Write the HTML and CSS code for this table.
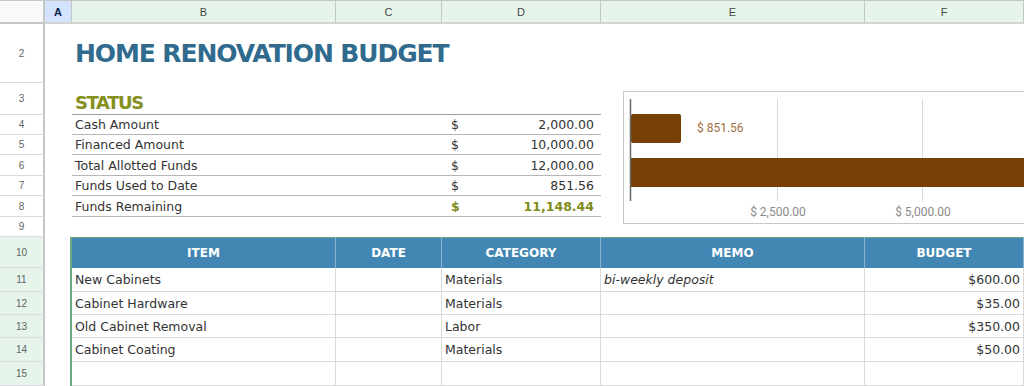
FILE: index.html
```html
<!DOCTYPE html>
<html>
<head>
<meta charset="utf-8">
<link rel="stylesheet" href="styles.css">
</head>
<body>
<div class="sheet">
  <div class="chart">
    <svg width="440" height="134" viewBox="0 0 440 134">
      <line x1="153.5" y1="7" x2="153.5" y2="109" stroke="#d9d9d9" stroke-width="1"/>
      <line x1="298.5" y1="7" x2="298.5" y2="109" stroke="#d9d9d9" stroke-width="1"/>
      <rect x="7" y="22" width="50" height="29" rx="2" fill="#773f03"/>
      <rect x="7" y="66" width="430" height="29" fill="#773f03"/>
      <line x1="6.5" y1="7" x2="6.5" y2="109" stroke="#666" stroke-width="1.5"/>
      <text x="73" y="40" class="lbl">$ 851.56</text>
      <text x="154" y="124" class="ax" text-anchor="middle">$ 2,500.00</text>
      <text x="299" y="124" class="ax" text-anchor="middle">$ 5,000.00</text>
    </svg>
  </div>

  <!-- column headers -->
  <div class="corner"></div>
  <div class="ch sel">A</div>
  <div class="ch">B</div>
  <div class="ch">C</div>
  <div class="ch">D</div>
  <div class="ch">E</div>
  <div class="ch">F</div>

  <!-- row 2 -->
  <div class="rh">2</div>
  <div></div>
  <div class="title">HOME RENOVATION BUDGET</div>
  <div></div>
  <div></div>

  <!-- row 3 -->
  <div class="rh">3</div>
  <div></div>
  <div class="status">STATUS</div>

  <!-- rows 4-8 -->
  <div class="rh">4</div>
  <div></div>
  <div class="sl">Cash Amount</div>
  <div class="sc"></div>
  <div class="sv"><span>$</span><span>2,000.00</span></div>

  <div class="rh">5</div>
  <div></div>
  <div class="sl">Financed Amount</div>
  <div class="sc"></div>
  <div class="sv"><span>$</span><span>10,000.00</span></div>

  <div class="rh">6</div>
  <div></div>
  <div class="sl">Total Allotted Funds</div>
  <div class="sc"></div>
  <div class="sv"><span>$</span><span>12,000.00</span></div>

  <div class="rh">7</div>
  <div></div>
  <div class="sl">Funds Used to Date</div>
  <div class="sc"></div>
  <div class="sv"><span>$</span><span>851.56</span></div>

  <div class="rh">8</div>
  <div></div>
  <div class="sl">Funds Remaining</div>
  <div class="sc"></div>
  <div class="sv total"><span>$</span><span>11,148.44</span></div>

  <!-- row 9 -->
  <div class="rh">9</div>
  <div></div>
  <div></div>
  <div></div>
  <div></div>

  <!-- row 10 header -->
  <div class="rh hl">10</div>
  <div class="ta"></div>
  <div class="th">ITEM</div>
  <div class="th">DATE</div>
  <div class="th">CATEGORY</div>
  <div class="th">MEMO</div>
  <div class="th">BUDGET</div>

  <div class="rh hl">11</div>
  <div class="ta"></div>
  <div class="td">New Cabinets</div>
  <div class="td"></div>
  <div class="td">Materials</div>
  <div class="td memo">bi-weekly deposit</div>
  <div class="td num">$600.00</div>

  <div class="rh hl">12</div>
  <div class="ta"></div>
  <div class="td">Cabinet Hardware</div>
  <div class="td"></div>
  <div class="td">Materials</div>
  <div class="td memo"></div>
  <div class="td num">$35.00</div>

  <div class="rh hl">13</div>
  <div class="ta"></div>
  <div class="td">Old Cabinet Removal</div>
  <div class="td"></div>
  <div class="td">Labor</div>
  <div class="td memo"></div>
  <div class="td num">$350.00</div>

  <div class="rh hl">14</div>
  <div class="ta"></div>
  <div class="td">Cabinet Coating</div>
  <div class="td"></div>
  <div class="td">Materials</div>
  <div class="td memo"></div>
  <div class="td num">$50.00</div>

  <div class="rh hl">15</div>
  <div class="ta"></div>
  <div class="td"></div>
  <div class="td"></div>
  <div class="td"></div>
  <div class="td"></div>
  <div class="td num"></div>
</div>
</body>
</html>
```

FILE: styles.css
```css
html, body {
  margin: 0;
  padding: 0;
  background: #ffffff;
}
body {
  width: 1024px;
  height: 386px;
  overflow: hidden;
  font-family: "DejaVu Sans", "Liberation Sans", sans-serif;
}
.sheet {
  display: grid;
  width: 1024px;
  grid-template-columns: 45px 27px 264px 106px 159px 264px 1fr;
  grid-template-rows: 24px 59px 32px 20px 20px 21px 20px 21px 20px 31px 24px 23px 23px 24px 24px;
}
.sheet > div {
  box-sizing: border-box;
  min-width: 0;
}

/* headers */
.corner {
  background: #f8f9fa;
  border-top: 1px solid #c4c7c5;
  border-right: 2px solid #c4c7c5;
  border-bottom: 2px solid #c4c7c5;
}
.ch {
  background: #e6f4ea;
  border-top: 1px solid #c4c7c5;
  border-right: 1px solid #c4c7c5;
  border-bottom: 2px solid #d3d5d4;
  display: flex;
  align-items: center;
  justify-content: center;
  font: 11px "Liberation Sans", Arial, sans-serif;
  color: #444746;
}
.ch.sel {
  background: #d3e3fd;
  color: #041e49;
  font-weight: bold;
}
.rh {
  border-right: 2px solid #c4c7c5;
  border-bottom: 1px solid #dadce0;
  display: flex;
  align-items: center;
  justify-content: center;
  font: 10px "Liberation Sans", Arial, sans-serif;
  color: #5f6368;
}
.rh.hl {
  background: #e6f4ea;
}

/* title / status */
.title {
  grid-column: span 3;
  display: flex;
  align-items: center;
  padding-left: 3px;
  font-size: 25px;
  letter-spacing: -1.1px;
  font-weight: bold;
  color: #306b8e;
  white-space: nowrap;
}
.status {
  grid-column: span 3;
  display: flex;
  align-items: flex-end;
  padding-left: 3px;
  padding-bottom: 1px;
  font-size: 18px;
  letter-spacing: -1.4px;
  font-weight: bold;
  color: #86901f;
  border-bottom: 1px solid #9e9e9e;
}
.sl, .sc, .sv {
  border-bottom: 1px solid #b7b7b7;
  font-size: 12.5px;
  color: #333;
  display: flex;
  align-items: center;
}
.sl {
  padding-left: 3px;
  white-space: nowrap;
}
.sv {
  justify-content: space-between;
  padding-left: 9px;
  padding-right: 7px;
}
.sv.total {
  color: #7f8c19;
  font-weight: bold;
}

/* chart */
.chart {
  grid-column: 6 / 8;
  grid-row: 3 / 10;
  margin: 8px -30px 13px 22px;
  border: 1px solid #c8c8c8;
  background: #fff;
  overflow: hidden;
}
.chart svg {
  display: block;
}
.lbl {
  font: 12px Roboto, "Liberation Sans", sans-serif;
  fill: #a0703f;
}
.ax {
  font: 12px Roboto, "Liberation Sans", sans-serif;
  fill: #8a8a8a;
}

/* table */
.ta {
  border-right: 2px solid #6aa87e;
}
.th {
  background: #4287b3;
  border-top: 1px solid #6aa87e;
  border-right: 1px solid #8fb3cc;
  color: #fff;
  font-size: 12px;
  font-weight: bold;
  display: flex;
  align-items: center;
  justify-content: center;
}
.td {
  border-right: 1px solid #d9d9d9;
  border-bottom: 1px solid #d9d9d9;
  font-size: 12.5px;
  color: #333;
  display: flex;
  align-items: center;
  padding-left: 3px;
  white-space: nowrap;
}
.td.memo {
  font-style: italic;
}
.td.num {
  justify-content: flex-end;
  padding-right: 3px;
}
```
